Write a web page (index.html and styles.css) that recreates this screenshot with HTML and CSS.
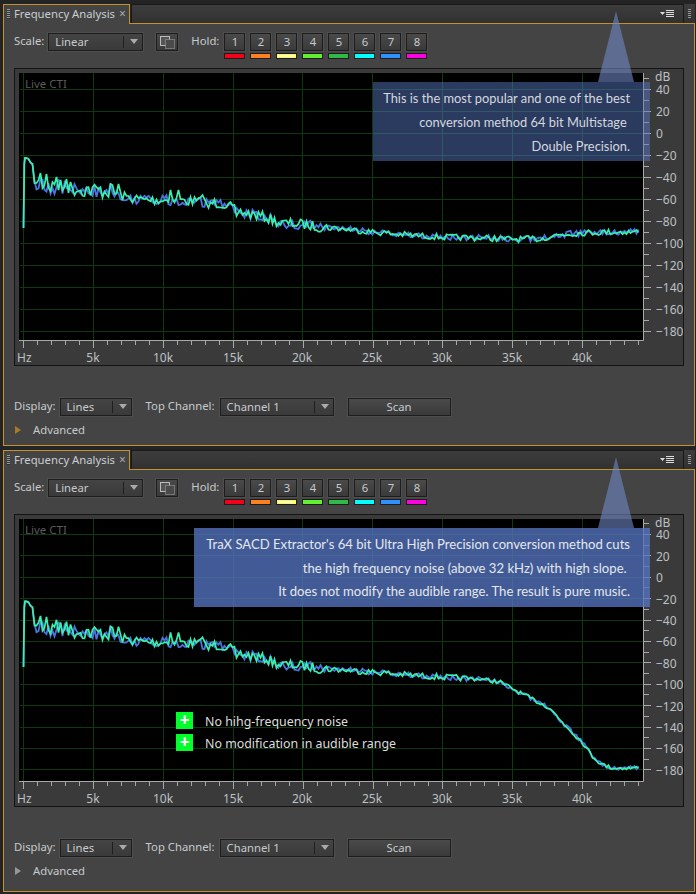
FILE: index.html
```html
<!DOCTYPE html>
<html lang="en">
<head>
<meta charset="utf-8">
<title>Frequency Analysis</title>
<link rel="stylesheet" href="styles.css">
</head>
<body>
<section class="panel panel-a">
  <header class="tabs">
    <div class="tab"><span class="grip"></span><span class="tab-title">Frequency Analysis</span><span class="tab-close">×</span></div>
    <div class="tab-rest">
      <svg class="menu-icon" width="15" height="8" viewBox="0 0 15 8"><path d="M0 2h5L2.500 5z" fill="#ddd"/><path d="M6 .5h8M6 2.500h8M6 4.500h8M6 6.500h8" stroke="#ddd"/></svg>
    </div>
    <div class="tab-end"><span class="grip"></span></div>
  </header>
  <div class="panel-body">
    <div class="toolbar">
      <span class="label">Scale:</span>
      <div class="select select-scale"><span class="select-text">Linear</span><span class="select-arrow"></span></div>
      <button class="btn-icon"><svg width="16" height="14" viewBox="0 0 16 14"><rect x=".5" y=".5" width="9" height="9" fill="#555" stroke="#bbb"/><rect x="5.500" y="3.500" width="9" height="9" fill="#4a4a4a" stroke="#aaa" stroke-dasharray="1 1"/></svg></button>
      <span class="label label-hold">Hold:</span>
      <div class="holds">
        <div class="hold"><button class="hold-btn">1</button><span class="swatch c1"></span></div>
        <div class="hold"><button class="hold-btn">2</button><span class="swatch c2"></span></div>
        <div class="hold"><button class="hold-btn">3</button><span class="swatch c3"></span></div>
        <div class="hold"><button class="hold-btn">4</button><span class="swatch c4"></span></div>
        <div class="hold"><button class="hold-btn">5</button><span class="swatch c5"></span></div>
        <div class="hold"><button class="hold-btn">6</button><span class="swatch c6"></span></div>
        <div class="hold"><button class="hold-btn">7</button><span class="swatch c7"></span></div>
        <div class="hold"><button class="hold-btn">8</button><span class="swatch c8"></span></div>
      </div>
    </div>
    <div class="chart"><svg class="plot" data-curve="a" viewBox="15 69 668 296"></svg></div>
    <div class="footer">
      <span class="label">Display:</span>
      <div class="select select-display"><span class="select-text">Lines</span><span class="select-arrow"></span></div>
      <span class="label label-top">Top Channel:</span>
      <div class="select select-channel"><span class="select-text">Channel 1</span><span class="select-arrow"></span></div>
      <button class="btn-scan">Scan</button>
    </div>
    <div class="advanced"><span class="disclose"></span><span class="label">Advanced</span></div>
  </div>
  <div class="pointer"></div>
  <div class="note"><p>This is the most popular and one of the best</p><p>conversion method 64 bit Multistage&nbsp;</p><p>Double Precision.</p></div>
</section>

<section class="panel panel-b">
  <header class="tabs">
    <div class="tab"><span class="grip"></span><span class="tab-title">Frequency Analysis</span><span class="tab-close">×</span></div>
    <div class="tab-rest">
      <svg class="menu-icon" width="15" height="8" viewBox="0 0 15 8"><path d="M0 2h5L2.500 5z" fill="#ddd"/><path d="M6 .5h8M6 2.500h8M6 4.500h8M6 6.500h8" stroke="#ddd"/></svg>
    </div>
    <div class="tab-end"><span class="grip"></span></div>
  </header>
  <div class="panel-body">
    <div class="toolbar">
      <span class="label">Scale:</span>
      <div class="select select-scale"><span class="select-text">Linear</span><span class="select-arrow"></span></div>
      <button class="btn-icon"><svg width="16" height="14" viewBox="0 0 16 14"><rect x=".5" y=".5" width="9" height="9" fill="#555" stroke="#bbb"/><rect x="5.500" y="3.500" width="9" height="9" fill="#4a4a4a" stroke="#aaa" stroke-dasharray="1 1"/></svg></button>
      <span class="label label-hold">Hold:</span>
      <div class="holds">
        <div class="hold"><button class="hold-btn">1</button><span class="swatch c1"></span></div>
        <div class="hold"><button class="hold-btn">2</button><span class="swatch c2"></span></div>
        <div class="hold"><button class="hold-btn">3</button><span class="swatch c3"></span></div>
        <div class="hold"><button class="hold-btn">4</button><span class="swatch c4"></span></div>
        <div class="hold"><button class="hold-btn">5</button><span class="swatch c5"></span></div>
        <div class="hold"><button class="hold-btn">6</button><span class="swatch c6"></span></div>
        <div class="hold"><button class="hold-btn">7</button><span class="swatch c7"></span></div>
        <div class="hold"><button class="hold-btn">8</button><span class="swatch c8"></span></div>
      </div>
    </div>
    <div class="chart"><svg class="plot" data-curve="b" viewBox="15 515 668 291"></svg></div>
    <div class="footer">
      <span class="label">Display:</span>
      <div class="select select-display"><span class="select-text">Lines</span><span class="select-arrow"></span></div>
      <span class="label label-top">Top Channel:</span>
      <div class="select select-channel"><span class="select-text">Channel 1</span><span class="select-arrow"></span></div>
      <button class="btn-scan">Scan</button>
    </div>
    <div class="advanced"><span class="disclose"></span><span class="label">Advanced</span></div>
  </div>
  <div class="pointer"></div>
  <div class="note"><p>TraX SACD Extractor's 64 bit Ultra High Precision conversion method cuts</p><p>the high frequency noise (above 32 kHz) with high slope.&nbsp;</p><p>It does not modify the audible range. The result is pure music.</p></div>
  <ul class="legend">
    <li><span class="plus">+</span><span class="legend-text">No hihg-frequency noise</span></li>
    <li><span class="plus">+</span><span class="legend-text">No modification in audible range</span></li>
  </ul>
</section>
<script src="chart.js"></script>
</body>
</html>
```

FILE: styles.css
```css
* { box-sizing: border-box; }
html, body { margin: 0; padding: 0; }
body {
  width: 696px;
  height: 894px;
  background: #242424;
  padding: 4px 2px 0 3px;
  font-family: "Noto Sans", sans-serif;
  font-size: 11.300px;
  color: #c6cacd;
  overflow: hidden;
}
.panel { position: relative; width: 692px; height: 442px; display: flex; flex-direction: column; }
.panel-b { margin-top: 4px; }

.tabs { display: flex; height: 20px; flex: none; }
.tab {
  width: 127px;
  height: 20px;
  display: flex;
  align-items: center;
  background: #444;
  border: 1px solid #c3922e;
  border-bottom: 0;
  padding: 0 0 2px 3px;
  position: relative;
  z-index: 1;
}
.grip {
  display: block;
  width: 3px;
  height: 10px;
  background: repeating-linear-gradient(#999 0 1px, #333 1px 2px);
}
.tab-title { margin-left: 4px; color: #c9cdd0; white-space: nowrap; }
.tab-close { margin-left: 4px; color: #aaa; font-size: 12px; line-height: 10px; }
.tab-rest {
  flex: 1;
  height: 19px;
  margin-left: 1px;
  background: linear-gradient(#3d3d3d, #313131);
  border: 1px solid #191919;
  border-bottom: 0;
  display: flex;
  align-items: center;
  justify-content: flex-end;
  padding-right: 8px;
}
.tab-end {
  width: 11px;
  height: 19px;
  background: linear-gradient(#3d3d3d, #313131);
  display: flex;
  align-items: center;
  justify-content: center;
}

.panel-body {
  flex: 1;
  display: flex;
  flex-direction: column;
  margin-top: -1px;
  background: #444;
  border: 1px solid #c3922e;
  padding: 0 0 0 10px;
}
.toolbar {
  flex: none;
  display: flex;
  align-items: flex-start;
  height: 44px;
  padding-top: 9px;
}
.label { line-height: 16px; color: #c6cacd; white-space: nowrap; }
.select {
  height: 18px;
  display: flex;
  align-items: center;
  border: 1px solid #1d1d1d;
  background: linear-gradient(#444, #3a3a3a);
  box-shadow: 0 0 0 1px #4e4e4e;
  flex: none;
}
.select-text { padding-left: 6px; flex: 1; margin-top: -2px; color: #c6cacd; }
.select-arrow {
  width: 19px;
  height: 12px;
  border-left: 1px solid #1f1f1f;
  position: relative;
}
.select-arrow::after {
  content: "";
  position: absolute;
  left: 6px;
  top: 3px;
  border: 4px solid transparent;
  border-top: 5px solid #aaa;
  border-bottom: 0;
}
.select-scale { width: 95px; margin-left: 4px; }
.btn-icon {
  width: 22px;
  height: 18px;
  margin-left: 13px;
  padding: 1px 0 0 1px;
  border: 1px solid #1d1d1d;
  background: linear-gradient(#484848, #3a3a3a);
  box-shadow: 0 0 0 1px #4e4e4e;
  display: flex;
  align-items: center;
  justify-content: center;
}
.label-hold { margin-left: 13px; }
.holds { display: flex; gap: 5px; margin-left: 5px; }
.hold { display: flex; flex-direction: column; gap: 2px; width: 21px; }
.hold-btn {
  width: 21px;
  height: 18px;
  padding: 0 0 1px;
  border: 1px solid #1d1d1d;
  background: linear-gradient(#4a4a4a, #3a3a3a);
  color: #c6cacd;
  font: inherit;
  line-height: 14px;
  box-shadow: 0 0 0 1px #4e4e4e;
}
.swatch { display: block; height: 6px; border: 1px solid #1d1d1d; }
.c1 { background: #f50018; }
.c2 { background: #ff8020; }
.c3 { background: #fff; box-shadow: inset 0 0 0 1px #ffff20; }
.c4 { background: #60f030; }
.c5 { background: #30b848; }
.c6 { background: #00ffff; }
.c7 { background: #3090ff; }
.c8 { background: #ff00e0; }

.chart {
  flex: none;
  width: 670px;
  height: 298px;
  border: 1px solid #141414;
}
.panel-b .chart { height: 293px; }
.plot { display: block; width: 668px; height: 296px; background: #3a3a3a; }
.panel-b .plot { height: 291px; }
.plot text { font-family: "Noto Sans", sans-serif; font-size: 12px; fill: #bcc0c4; }
.plot .cti { font-size: 11.500px; fill: #5a5a5a; }

.footer {
  flex: none;
  display: flex;
  align-items: flex-start;
  padding-top: 32px;
  height: 50px;
}
.select-display { width: 72px; margin-left: 4px; }
.label-top { margin-left: 14px; }
.select-channel { width: 114px; margin-left: 5px; }
.btn-scan {
  width: 103px;
  height: 18px;
  margin-left: 14px;
  padding: 0 0 1px;
  border: 1px solid #1d1d1d;
  background: linear-gradient(#4a4a4a, #3a3a3a);
  box-shadow: 0 0 0 1px #4e4e4e;
  color: #c6cacd;
  font: inherit;
  line-height: 14px;
  flex: none;
}
.advanced {
  flex: 1;
  display: flex;
  align-items: flex-start;
  padding: 6px 0 0 1px;
}
.disclose {
  width: 0;
  height: 0;
  margin: 4px 12px 0 0;
  border: 4px solid transparent;
  border-left: 6px solid #a87c20;
  border-right: 0;
}
.panel-b .disclose { border-left-color: #999; }

.pointer {
  position: absolute;
  left: 595px;
  top: 7px;
  width: 36px;
  height: 71px;
  background: rgba(110, 135, 195, .6);
  clip-path: polygon(50% 0, 100% 100%, 0 100%);
  z-index: 2;
}
.note {
  position: absolute;
  left: 370px;
  top: 78px;
  width: 277px;
  height: 79px;
  padding: 4px 20px 0 0;
  background: rgba(85, 117, 192, .5);
  text-align: right;
  font-family: "Lato", sans-serif;
  font-size: 12.850px;
  color: #d4d8de;
  z-index: 2;
}
.note p { margin: 0; height: 24px; line-height: 24px; white-space: nowrap; }
.panel-b .note {
  left: 191px;
  width: 456px;
  background: rgba(85, 117, 192, .78);
  color: #e4e8ee;
  font-size: 13.100px;
  padding-top: 5px;
}
.panel-b .note p { height: 23.500px; line-height: 23.500px; }
.legend {
  position: absolute;
  left: 173px;
  top: 262px;
  margin: 0;
  padding: 0;
  list-style: none;
  font-size: 12.400px;
  color: #ddd;
}
.legend li { display: flex; align-items: center; height: 17px; margin-bottom: 5px; white-space: nowrap; }
.legend-text { padding-top: 2px; }
.plus {
  width: 17px;
  height: 17px;
  margin-right: 12px;
  background: #00ff2a;
  color: #fff;
  font-size: 17px;
  font-weight: 700;
  line-height: 16px;
  text-align: center;
}
```

FILE: chart.js
```js
(function () {
  var NS = 'http://www.w3.org/2000/svg';
  var LOW = [[25,158],[29,159],[32,166],[35,182],[50,186],[70,188],[90,190],[110,191],[125,197],[145,200],[165,200],[190,201],[205,202],[225,204],[240,212],[265,217],[280,223],[300,224],[320,227],[335,228]];
  var SPIKES = [[40,173],[46,174],[55,177],[66,179],[112,185],[118,184],[170,190],[178,190],[202,195],[207,208],[230,202],[235,216]];
  function toB(y) { return (y - 132.7) * 21.4 / 22 + 576.7; }
  function mapB(list) { return list.map(function (p) { return [p[0], toB(p[1])]; }); }
  var CURVES = {
    a: {
      top: 73, axis: 340, zero: 132.7, step: 22, seed: 7,
      keys: LOW.concat([[373,232],[407,235],[440,237],[483,238],[510,239],[540,239],[557,235],[580,233],[607,232],[639,232]]),
      spikes: SPIKES
    },
    b: {
      top: 519, axis: 781, zero: 576.7, step: 21.4, seed: 7,
      keys: mapB(LOW).concat([[373,672],[407,675],[440,677],[480,679],[500,682],[511,688],[530,698],[550,708],[560,720],[573,733],[583,743],[593,757],[603,765],[613,768],[639,768]]),
      spikes: mapB(SPIKES)
    }
  };

  function el(parent, name, attrs, text) {
    var n = document.createElementNS(NS, name);
    for (var k in attrs) n.setAttribute(k, attrs[k]);
    if (text) n.textContent = text;
    parent.appendChild(n);
    return n;
  }
  function rng(seed) {
    var s = seed;
    return function () {
      s = (s * 16807) % 2147483647;
      return s / 2147483647;
    };
  }
  function baseAt(keys, x) {
    for (var i = 1; i < keys.length; i++) {
      if (x <= keys[i][0]) {
        var a = keys[i - 1], b = keys[i];
        return a[1] + (b[1] - a[1]) * (x - a[0]) / (b[0] - a[0]);
      }
    }
    return keys[keys.length - 1][1];
  }
  function amplitude(x, rolloff) {
    if (x < 32) return 0.6;
    if (x < 115) return 16;
    if (x < 235) return 10;
    if (x < 330) return 10;
    if (rolloff && x > 470) return 4;
    return 6;
  }
  function trace(c, rolloff, seed, withSpikes) {
    var r = rng(seed), pts = [];
    pts.push([23.5, rolloff ? 667 : 228]);
    pts.push([24.3, c.keys[0][1] + 6]);
    pts.push([25, c.keys[0][1]]);
    var s = 0;
    for (var x = 26.5; x <= 639; x += 2) {
      var n = (r() - 0.5) * amplitude(x, rolloff);
      var y = baseAt(c.keys, x) + n;
      if (withSpikes && s < c.spikes.length && x >= c.spikes[s][0]) {
        y = c.spikes[s][1];
        s++;
      }
      pts.push([x, y]);
    }
    return pts.map(function (p) { return p[0].toFixed(1) + ',' + p[1].toFixed(1); }).join(' ');
  }

  document.querySelectorAll('.plot').forEach(function (svg) {
    var key = svg.getAttribute('data-curve');
    var c = CURVES[key];
    var rolloff = key === 'b';
    el(svg, 'rect', { x: 19, y: c.top, width: 624, height: c.axis - c.top, fill: '#000' });

    var grid = '';
    var i, y, x;
    for (i = 0; i < 9; i++) {
      x = Math.round(23 + 69.85 * i) + 0.5;
      grid += 'M' + x + ' ' + c.top + 'V' + c.axis;
    }
    for (i = -2; i <= 9; i++) {
      y = Math.round(c.zero + c.step * i) + 0.5;
      grid += 'M20 ' + y + 'H643';
    }
    el(svg, 'path', { d: grid, stroke: '#0c3a0c', 'stroke-width': 1, fill: 'none' });

    el(svg, 'polyline', { points: trace(c, rolloff, c.seed + 11, false), fill: 'none', stroke: '#4a74e0', 'stroke-width': 1.8 });
    el(svg, 'polyline', { points: trace(c, rolloff, c.seed, true), fill: 'none', stroke: '#3af0b0', 'stroke-width': 1.7 });

    var ax = 'M643.5 ' + c.top + 'V' + (c.axis + 0.5) + 'H19';
    for (i = 0; i <= 44; i++) {
      x = Math.round(23.3 + 13.97 * i) + 0.5;
      ax += 'M' + x + ' ' + c.axis + 'v' + (i % 5 === 0 ? 8 : 5);
    }
    for (i = -5; i <= 18; i++) {
      y = Math.round(c.zero + c.step * i / 2) + 0.5;
      if (y > c.axis || y < c.top) continue;
      ax += 'M644 ' + y + 'h' + (i % 2 === 0 ? 7 : 5);
    }
    el(svg, 'path', { d: ax, stroke: '#a8a8a8', 'stroke-width': 1, fill: 'none' });

    el(svg, 'text', { x: 25, y: c.top + 14.5, class: 'cti' }, 'Live CTI');
    el(svg, 'text', { x: 17, y: c.axis + 22 }, 'Hz');
    for (i = 1; i <= 8; i++) {
      el(svg, 'text', { x: Math.round(23 + 69.85 * i), y: c.axis + 22, 'text-anchor': 'middle' }, (i * 5) + 'k');
    }
    el(svg, 'text', { x: 655, y: c.top + 8 }, 'dB');
    for (i = -2; i <= 9; i++) {
      var v = -i * 20;
      el(svg, 'text', { x: 656, y: c.zero + c.step * i + 5.500 }, (v < 0 ? '\u2212' + (-v) : String(v)));
    }
  });
})();
```
